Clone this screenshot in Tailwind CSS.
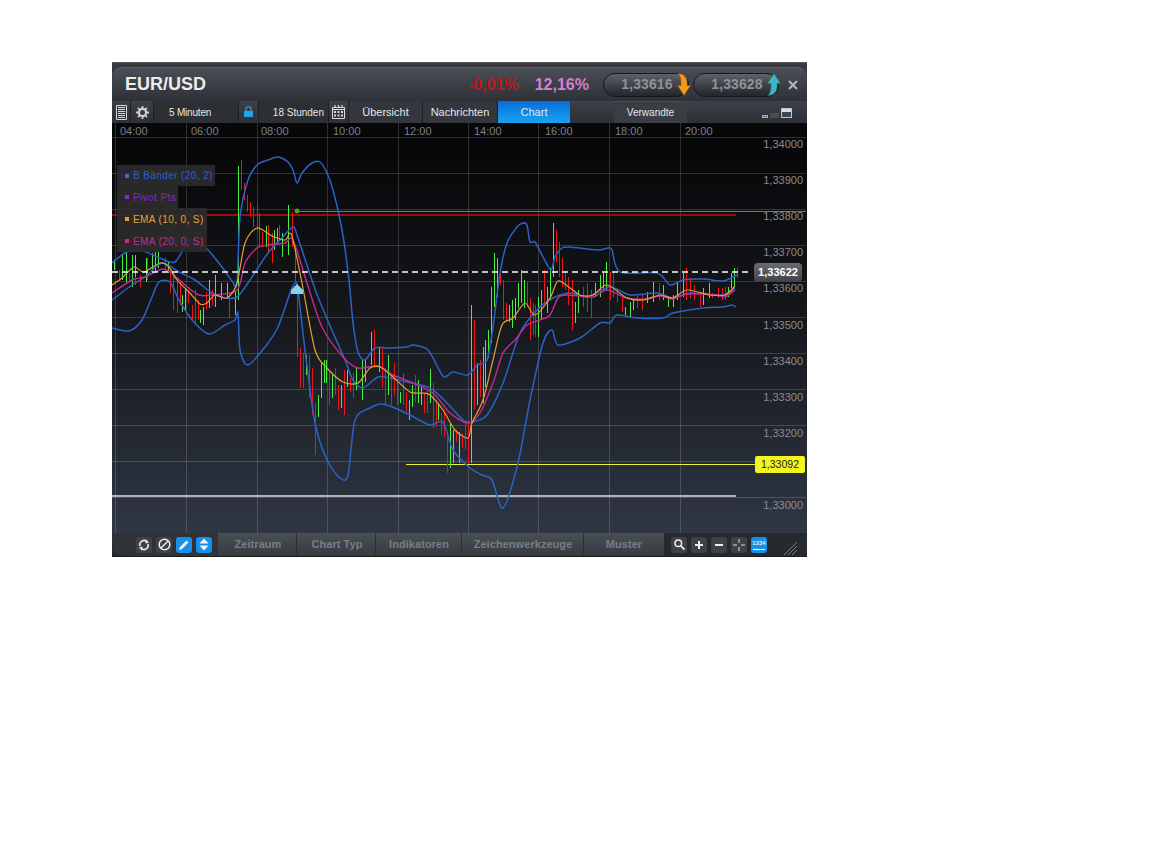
<!DOCTYPE html>
<html lang="de">
  <head>
    <meta charset="UTF-8" />
    <title>EUR/USD Chart</title>
    <script src="https://cdn.jsdelivr.net/npm/@tailwindcss/browser@4"></script>
  </head>
  <body class="bg-white font-['Liberation_Sans',Arial,sans-serif]">
    <div class="pt-[62px] pl-[112px] h-[864px]">
      <div class="w-[695px] h-[495px] flex flex-col bg-[#2a2e34]">
        <!-- Titelleiste -->
        <div class="h-[39px] pt-[4px] border-t border-[#55585d] bg-gradient-to-b from-[#3a3c40] to-[#26282c]">
          <div class="h-[34px] flex items-center rounded-t-[10px] border-t border-[#5a5e64] bg-gradient-to-b from-[#4a4e56] to-[#2e3137] text-[16px] font-bold">
            <span class="ml-[13px] text-[18px] text-[#ececec]">EUR/USD</span>
            <span class="ml-[262px] text-[#c3151a]">-0,01%</span>
            <span class="ml-[16px] text-[#d87fd0]">12,16%</span>
            <div class="ml-[14px] w-[86px] h-[24px] pl-[2px] rounded-full flex items-center justify-center border border-[#15171a] bg-gradient-to-b from-[#5e6269] to-[#23262b] text-[14px] tracking-[.1px] text-[#8e9398]">1,33616</div>
            <svg class="-ml-[12px] relative w-[14px] h-[25px]" viewBox="0 0 14 24"><path d="M1 1C7 1 10 5 10 10V13H13.500L7 23L.5 13H4V10C4 6 3 3 1 1Z" fill="#f09a1c" stroke="#8a5510" stroke-width=".5"/></svg>
            <div class="ml-[2px] w-[86px] h-[24px] pl-[2px] rounded-full flex items-center justify-center border border-[#15171a] bg-gradient-to-b from-[#5e6269] to-[#23262b] text-[14px] tracking-[.1px] text-[#8e9398]">1,33628</div>
            <svg class="-ml-[12px] relative w-[14px] h-[25px]" viewBox="0 0 14 24"><path d="M1 23C7 23 10 19 10 14V11H13.500L7 1L.5 11H4V14C4 18 3 21 1 23Z" fill="#3fb6c4" stroke="#1f6a74" stroke-width=".5"/></svg>
            <svg class="ml-[7px] w-[10px] h-[10px]" viewBox="0 0 10 10"><path d="M1 1L9 9M9 1L1 9" stroke="#a8bccb" stroke-width="2"/></svg>
          </div>
        </div>

        <!-- Werkzeugleiste -->
        <div class="h-[22px] flex text-[10px] text-[#e6e6e6] bg-gradient-to-b from-[#3c4047] to-[#2d3036]">
          <div class="w-[19px] flex items-center justify-center border-r border-[#1e2024]">
            <svg class="w-[11px] h-[15px]" viewBox="0 0 11 15"><path d="M.5.5H10.500V14.500H.5Z" fill="none" stroke="#d8d8d8"/><path d="M2 2.500H9M2 4.500H9M2 6.500H9M2 8.500H9M2 10.500H9M2 12.500H9" stroke="#d8d8d8"/></svg>
          </div>
          <div class="w-[23px] flex items-center justify-center border-r border-[#1e2024]">
            <svg class="w-[13px] h-[13px]" viewBox="0 0 13 13"><circle cx="6.500" cy="6.500" r="3.600" fill="none" stroke="#d0d0d0" stroke-width="2.200"/><path d="M6.500 0V2.500M6.500 10.500V13M0 6.500H2.500M10.500 6.500H13M2 2L3.700 3.700M9.300 9.300L11 11M11 2L9.300 3.700M3.700 9.300L2 11" stroke="#d0d0d0" stroke-width="1.800"/></svg>
          </div>
          <div class="w-[85px] pl-[15px] flex items-center tracking-[-.2px] bg-[#2c2f34] border-r border-[#1e2024]">5 Minuten</div>
          <div class="w-[20px] flex items-center justify-center border-r border-[#1e2024]">
            <svg class="w-[9px] h-[12px]" viewBox="0 0 9 12"><path d="M2 5V3C2 0 7 0 7 3V5" fill="none" stroke="#2aa0ea" stroke-width="1.200"/><rect y="5" width="9" height="6" fill="#2aa0ea"/></svg>
          </div>
          <div class="w-[70px] flex items-center justify-end pr-[4px] bg-[#2c2f34] border-r border-[#1e2024]">18 Stunden</div>
          <div class="w-[20px] flex items-center justify-center border-r border-[#1e2024]">
            <svg class="w-[13px] h-[14px]" viewBox="0 0 13 14"><path d="M.5 2.500H12.500V13.500H.5Z" fill="none" stroke="#dcdcdc"/><path d="M3 0V3M6.500 0V3M10 0V3M1 4.500H12" stroke="#dcdcdc" stroke-width="1.200"/><path d="M2 6H4V8H2ZM5.500 6H7.500V8H5.500ZM9 6H11V8H9ZM2 9.500H4V11.500H2ZM5.500 9.500H7.500V11.500H5.500ZM9 9.500H11V11.500H9Z" fill="#dcdcdc"/></svg>
          </div>
          <div class="w-[74px] flex items-start pt-[3px] justify-center text-[11px] border-r border-[#1e2024] bg-[#33363c]">Übersicht</div>
          <div class="w-[75px] flex items-start pt-[3px] justify-center text-[11px] border-r border-[#1e2024] bg-[#33363c]">Nachrichten</div>
          <div class="w-[72px] flex items-start pt-[3px] justify-center text-[11px] bg-gradient-to-b from-[#0a6fd6] to-[#18a2f2]">Chart</div>
          <div class="w-[73px] ml-[44px] flex items-center justify-center bg-[#3a3d43] border-t border-[#4a4e54]">Verwandte</div>
          <div class="ml-[75px] flex items-end gap-[2px] pb-[5px]">
            <div class="w-[6px] h-[3px] border border-[#8fb2c4] bg-[#597788]"></div>
            <div class="w-[9px] h-[5px] bg-[#4a4e54]"></div>
            <div class="w-[11px] h-[10px] border border-[#b6c8d4] bg-[linear-gradient(#d5e0e6_35%,#3a4650_35%)]"></div>
          </div>
        </div>

        <!-- Chart -->
        <div class="relative h-[410px] bg-gradient-to-b from-[#08080a] from-[8%] via-[#14161a] via-[45%] to-[#2f3744]">
          <svg class="block w-[695px] h-[410px]" viewBox="112 123 695 410" font-family="Liberation Sans, Arial, sans-serif">
            <path stroke="#fff" stroke-opacity=".16" d="M115.500 123V533M186.500 123V533M257.500 123V533M327.500 123V533M398.500 123V533M468.500 123V533M538.500 123V533M609.500 123V533M680.500 123V533M112 137.500H806M112 173.500H806M112 209.500H806M112 245.500H806M112 281.500H806M112 317.500H806M112 353.500H806M112 389.500H806M112 425.500H806M112 461.500H806M112 497.500H806" />
            <g font-size="11" fill="#7e8084">
              <text x="120" y="135">04:00</text><text x="191" y="135">06:00</text><text x="261" y="135">08:00</text><text x="333" y="135">10:00</text><text x="404" y="135">12:00</text><text x="474" y="135">14:00</text><text x="545" y="135">16:00</text><text x="615" y="135">18:00</text><text x="685" y="135">20:00</text>
              <g fill="#8a8d91" text-anchor="end">
                <text x="803" y="148">1,34000</text><text x="803" y="184">1,33900</text><text x="803" y="220">1,33800</text><text x="803" y="256">1,33700</text><text x="803" y="292">1,33600</text><text x="803" y="329">1,33500</text><text x="803" y="365">1,33400</text><text x="803" y="401">1,33300</text><text x="803" y="437">1,33200</text><text x="803" y="509">1,33000</text>
              </g>
            </g>
            <path d="M297 211.500H806" stroke="#6f8f1e" />
            <circle cx="297" cy="211" r="2.400" fill="#5f9a20" />
            <path d="M112 215H736" stroke="#c01010" stroke-width="1.600" />
            <path d="M406 464.500H755" stroke="#f2f23a" />
            <path d="M112 496H736" stroke="#b0b2b6" stroke-width="2.200" />

            <g transform="translate(.5 0)" fill="none">
              <!-- Kerzen rot -->
              <path stroke="#f01414" d="M119 270V280M129 273V282M135 268V285M140 275V287M147 258V280M165 258V273M170 270V293M173 273V310M177 277V313M180 280V305M188 290V303M192 305V320M195 290V323M198 300V320M206 292V310M212 290V306M229 292V318M241 160V190M244 183V200M247 195V212M250 202V217M253 207V227M257 203V230M259 213V247M262 232V247M268 225V252M272 233V263M279 225V240M292 212V247M295 247V283M297 290V357M300 348V388M303 353V388M309 355V398M312 368V415M315 403V455M329 372V405M335 368V395M338 385V410M344 370V415M350 378V392M353 373V398M374 330V368M382 348V388M385 368V405M391 375V405M394 363V395M397 382V405M403 373V405M406 392V412M415 375V402M424 393V413M427 390V413M433 383V428M436 403V427M441 413V435M444 410V437M447 435V473M456 430V442M462 433V448M465 423V450M468 423V463M474 320V410M480 360V397M500 273V285M503 280V320M506 303V320M527 282V307M530 298V340M533 303V335M535 305V337M544 270V303M556 230V263M559 242V277M562 258V287M565 273V290M568 277V305M572 280V330M583 287V307M587 283V312M591 290V318M610 272V300M613 272V297M617 290V302M622 297V312M637 296V308M642 294V310M659 283V300M686 268V300M690 278V298M694 285V300M700 293V307M712 293V298M718 288V298M722 288V300M725 287V300M737 267V278" />
              <!-- Kerzen grün -->
              <path stroke="#48f040" d="M114 260V270M122 255V280M126 252V282M132 255V287M135 255V277M146 258V282M152 253V270M155 252V272M158 252V268M168 262V273M182 295V312M185 288V310M200 310V323M203 307V325M209 280V308M215 275V307M221 283V300M227 283V298M235 290V315M238 166V300M266 226V247M274 230V250M277 228V243M282 233V257M288 205V255M306 355V375M318 395V417M321 363V398M324 360V383M326 360V383M332 373V398M341 385V408M347 370V387M356 368V390M362 360V400M365 359V382M371 332V365M379 348V372M388 355V395M400 392V403M409 400V420M412 385V407M418 380V403M421 387V405M430 369V403M438 403V420M450 423V468M453 430V463M459 432V463M471 305V463M477 363V405M483 347V403M485 340V387M488 330V358M491 287V343M494 253V307M497 258V297M509 305V322M512 300V328M515 298V320M518 283V308M521 270V303M524 280V308M538 297V337M541 290V320M547 287V313M550 268V300M553 223V277M575 302V323M578 290V313M595 283V297M600 275V297M603 273V290M606 262V290M625 307V315M630 302V317M633 300V310M647 292V303M653 282V302M663 285V300M668 297V307M673 295V307M677 283V300M683 273V297M703 288V305M709 283V298M728 287V297M731 273V288M734 268V287" />
            </g>

            <!-- Bollinger Bänder -->
            <path class="kurve" fill="none" stroke="#2a62c8" stroke-width="1.500" data-p="112,263 125,253 140,250 160,258 175,262 190,240 205,247 222,267 232,281 237,283 240,217 248,180 257,165 268,160 278,157 288,162 293,170 297,183 302,173 312,163 320,162 327,173 333,190 342,230 349,280 353,323 358,352 365,360 375,348 390,348 407,347 413,345 428,350 442,375 447,376 453,372 468,375 477,365 487,360 493,327 500,273 507,243 517,227 523,223 527,225 530,242 535,242 543,257 551,270 555,257 562,248 570,247 597,250 608,248 612,250 620,272 657,273 670,285 683,280 703,279 723,281 737,275" />
            <path class="kurve" fill="none" stroke="#2a62c8" stroke-width="1.500" data-p="112,300 132,285 145,277 162,263 179,272 195,280 212,293 225,298 237,297 248,283 268,253 282,238 293,227 298,238 318,297 345,360 353,380 363,388 378,377 390,378 407,382 430,388 447,403 463,420 472,422 487,415 503,383 520,333 537,310 553,298 570,293 587,297 610,287 630,295 657,293 673,298 690,293 723,295 735,288" />
            <path class="kurve" fill="none" stroke="#2a62c8" stroke-width="1.500" data-p="112,328 129,331 142,320 152,297 159,282 170,282 179,300 192,320 209,334 225,325 235,320 238,313 240,350 248,365 265,347 278,327 290,293 295,283 298,290 305,350 315,423 327,460 340,478 348,475 355,420 370,408 380,404 390,406 410,415 430,425 443,422 453,450 470,468 482,475 492,480 503,508 518,463 530,400 543,343 552,330 558,345 580,338 600,323 610,323 617,315 637,318 663,318 673,313 703,308 723,307 732,305 736,307" />
            <!-- EMA -->
            <path class="kurve" fill="none" stroke="#c9288e" stroke-width="1.400" data-p="112,293 132,280 145,277 162,269 170,272 185,285 199,295 212,295 237,290 245,263 257,248 268,245 285,243 293,240 307,283 322,327 343,357 358,368 378,366 393,375 413,383 433,393 450,413 468,423 480,413 493,383 503,353 515,340 527,325 540,320 550,315 558,298 567,295 593,297 607,290 627,298 647,299 660,296 673,299 687,294 717,295 725,297 735,290" />
            <path class="kurve" fill="none" stroke="#e8a030" stroke-width="1.200" data-p="112,285 122,278 134,267 144,272 160,263 169,267 177,280 189,292 200,304 207,303 215,295 227,298 237,283 245,243 257,228 272,236 285,240 290,233 293,240 302,283 315,350 327,368 343,382 358,383 370,368 380,367 393,377 410,392 422,393 430,395 443,410 455,430 468,438 472,423 483,400 493,360 502,325 513,318 525,303 535,315 550,298 558,281 570,288 580,295 593,295 607,285 627,298 643,300 660,295 673,298 687,290 710,295 725,295 735,286" />

            <path d="M112 272H752" stroke="#fff" stroke-width="1.400" stroke-dasharray="6 4" />
            <path d="M297 284L303 290V294H291V290Z" fill="#8ad2e6" />
          </svg>

          <!-- Legende -->
          <div class="absolute left-[5px] top-[42px] flex flex-col items-start text-[10px] tracking-[.4px]">
            <div class="h-[21px] w-[98px] pl-[8px] flex items-center gap-[4px] bg-[#2c2c2e]/90 text-[#2a62c8]"><span class="w-[4px] h-[4px] bg-[#2a72e0]"></span>B Bänder (20, 2)</div>
            <div class="h-[22px] w-[61px] pl-[8px] flex items-center gap-[4px] bg-[#2c2c2e]/90 text-[#8a20d8]"><span class="w-[4px] h-[4px] bg-[#8a20d8]"></span>Pivot Pts</div>
            <div class="h-[22px] w-[90px] pl-[8px] flex items-center gap-[4px] bg-[#2c2c2e]/90 text-[#e8a030]"><span class="w-[4px] h-[4px] bg-[#e8a030]"></span>EMA (10, 0, S)</div>
            <div class="h-[22px] w-[90px] pl-[8px] flex items-center gap-[4px] bg-[#2c2c2e]/90 text-[#c9288e]"><span class="w-[4px] h-[4px] bg-[#c9288e]"></span>EMA (20, 0, S)</div>
          </div>

          <!-- Preis-Marken -->
          <div class="absolute left-[642px] top-[140px] w-[48px] h-[19px] rounded-[4px] flex items-center justify-center bg-gradient-to-b from-[#6a6d72] to-[#3e4146] text-[11px] font-bold text-white">1,33622</div>
          <div class="absolute left-[643px] top-[333px] w-[50px] h-[17px] rounded-[2px] flex items-center justify-center bg-[#f4f41e] text-[10.500px] text-[#222]">1,33092</div>
        </div>

        <!-- Fußleiste -->
        <div class="h-[24px] flex bg-[#26292e] border-b border-[#1a1c1f]">
          <div class="w-[106px] pl-[24px] flex items-center gap-[4px] rounded-bl-[10px] bg-[#2f3238]">
            <div class="w-[16px] h-[16px] rounded-[3px] bg-[#3e4248] flex items-center justify-center">
              <svg class="w-[12px] h-[12px]" viewBox="0 0 12 12"><path d="M2 7A4.200 4.200 0 0 1 9 2.800M10 5A4.200 4.200 0 0 1 3 9.200" fill="none" stroke="#eee" stroke-width="1.600"/><path d="M8 .5L11 3.500L7.500 4.500ZM4 11.500L1 8.500L4.500 7.500Z" fill="#eee"/></svg>
            </div>
            <div class="w-[16px] h-[16px] rounded-[3px] bg-[#3e4248] flex items-center justify-center">
              <svg class="w-[13px] h-[13px]" viewBox="0 0 13 13"><circle cx="6.500" cy="6.500" r="5.300" fill="none" stroke="#eee" stroke-width="1.500"/><path d="M3 10L10 3" stroke="#eee" stroke-width="1.500"/></svg>
            </div>
            <div class="w-[16px] h-[16px] rounded-[3px] bg-[#1a8fe8] flex items-center justify-center">
              <svg class="w-[12px] h-[12px]" viewBox="0 0 12 12"><path d="M1 11L2 8L8.500 1.500L10.500 3.500L4 10Z" fill="#f2f6fa"/></svg>
            </div>
            <div class="w-[16px] h-[16px] rounded-[3px] bg-[#1a8fe8] flex items-center justify-center">
              <svg class="w-[10px] h-[13px]" viewBox="0 0 10 13"><path d="M5 .5L9.500 5.500H.5ZM5 12.500L.5 7.500H9.500Z" fill="#f2f6fa"/></svg>
            </div>
          </div>
          <div class="w-[446px] flex text-[11px] font-bold tracking-[.05px] text-[#787e85] bg-gradient-to-b from-[#4a4f57] to-[#363a41]">
            <div class="w-[79px] pl-[2px] flex items-center justify-center border-r border-[#2c2f34]">Zeitraum</div>
            <div class="w-[79px] pl-[2px] flex items-center justify-center border-r border-[#2c2f34]">Chart Typ</div>
            <div class="w-[86px] pl-[1px] flex items-center justify-center border-r border-[#2c2f34]">Indikatoren</div>
            <div class="w-[122px] pl-[1px] flex items-center justify-center border-r border-[#2c2f34]">Zeichenwerkzeuge</div>
            <div class="w-[80px] flex items-center justify-center">Muster</div>
          </div>
          <div class="flex-1 pl-[7px] flex items-center gap-[4px]">
            <div class="w-[16px] h-[16px] rounded-[3px] bg-[#3e4248] flex items-center justify-center">
              <svg class="w-[11px] h-[11px]" viewBox="0 0 11 11"><circle cx="4.300" cy="4.300" r="3.300" fill="none" stroke="#eee" stroke-width="1.500"/><path d="M6.800 6.800L10.500 10.500" stroke="#eee" stroke-width="1.800"/></svg>
            </div>
            <div class="w-[16px] h-[16px] rounded-[3px] bg-[#3e4248] flex items-center justify-center">
              <svg class="w-[10px] h-[10px]" viewBox="0 0 10 10"><path d="M5 1V9M1 5H9" stroke="#eee" stroke-width="2"/></svg>
            </div>
            <div class="w-[16px] h-[16px] rounded-[3px] bg-[#3e4248] flex items-center justify-center">
              <svg class="w-[10px] h-[10px]" viewBox="0 0 10 10"><path d="M1 5H9" stroke="#eee" stroke-width="2"/></svg>
            </div>
            <div class="w-[16px] h-[16px] rounded-[3px] bg-[#3e4248] flex items-center justify-center">
              <svg class="w-[14px] h-[14px]" viewBox="0 0 14 14"><path d="M7 1V5M7 9V13M1 7H5M9 7H13" stroke="#ddd"/></svg>
            </div>
            <div class="w-[16px] h-[16px] rounded-[3px] bg-[#1a8fe8] flex flex-col items-center justify-center">
              <span class="text-[6px] leading-[7px] font-bold text-[#dfeffa]">1234</span>
              <span class="w-[12px] h-px mt-[2px] bg-white"></span>
            </div>
            <svg class="ml-[12px] mt-[6px] w-[14px] h-[14px]" viewBox="0 0 14 14"><path d="M1 14L14 1M5 14L14 5M9 14L14 9" stroke="#777c82"/></svg>
          </div>
        </div>
      </div>
    </div>
    <script>
      // Kurven glätten (Catmull-Rom)
      document.querySelectorAll(".kurve").forEach((el) => {
        const p = el.dataset.p.split(" ").map((s) => s.split(",").map(Number));
        let d = "M" + p[0];
        for (let i = 0; i < p.length - 1; i++) {
          const a = p[i - 1] || p[i], b = p[i], c = p[i + 1], e = p[i + 2] || c;
          const k = 0.14;
          d += " C" + (b[0] + (c[0] - a[0]) * k) + " " + (b[1] + (c[1] - a[1]) * k) + " " +
            (c[0] - (e[0] - b[0]) * k) + " " + (c[1] - (e[1] - b[1]) * k) + " " + c[0] + " " + c[1];
        }
        el.setAttribute("d", d);
      });
    </script>
  </body>
</html>
